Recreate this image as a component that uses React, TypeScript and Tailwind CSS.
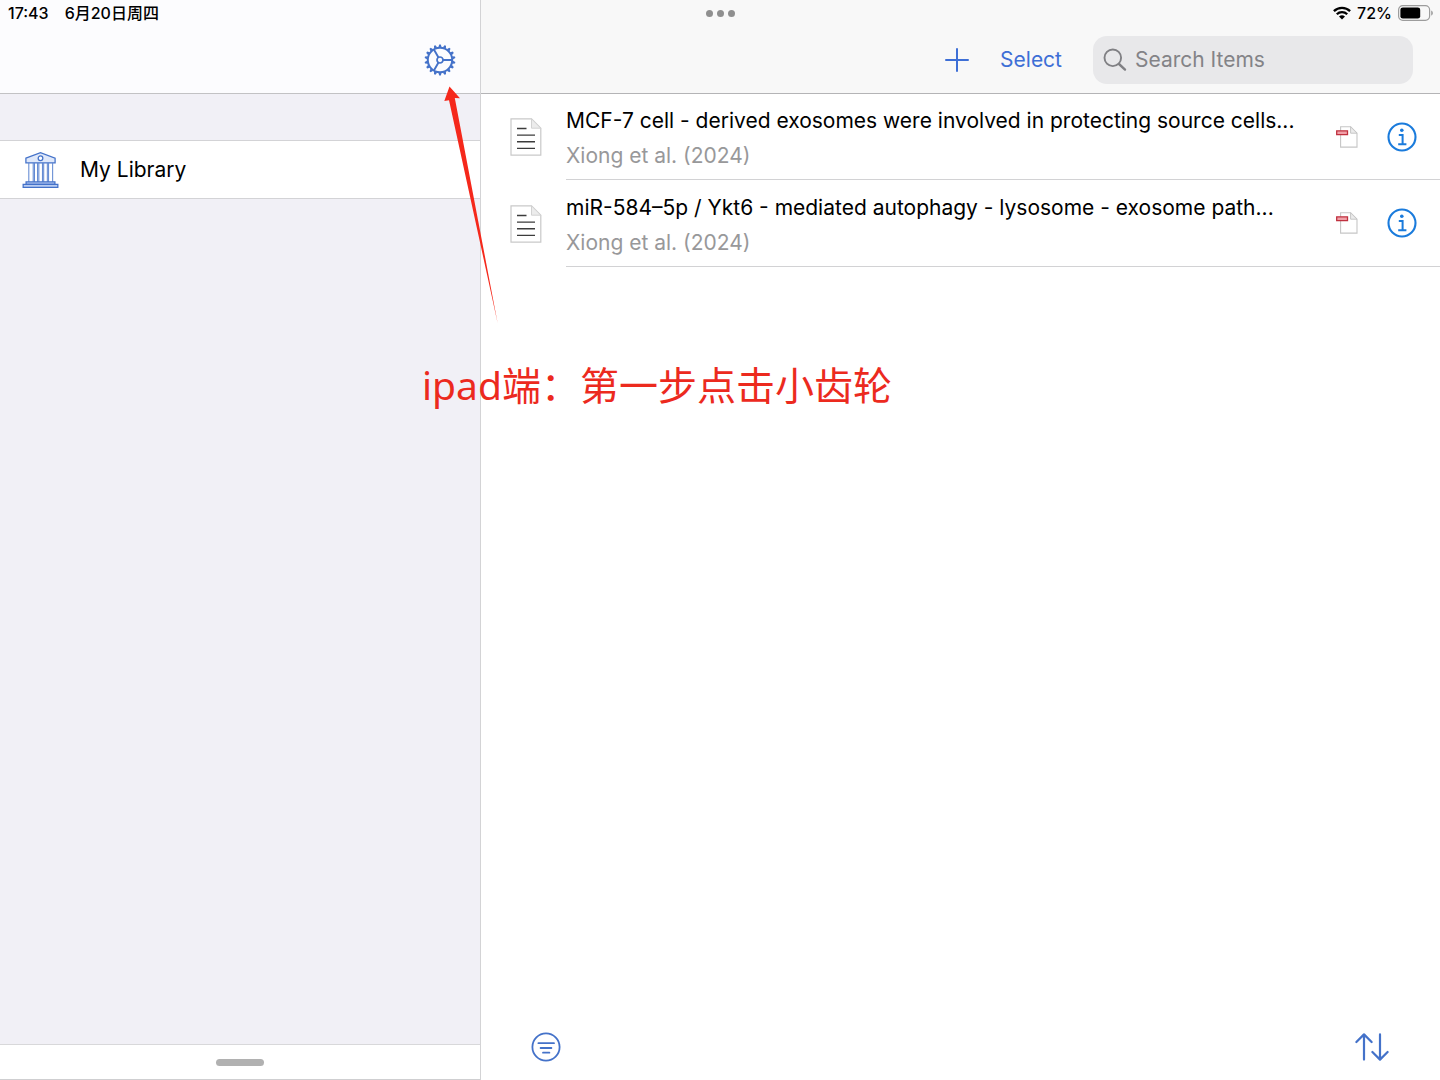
import React from "react";

type Item = { title: string; creator: string };

const items: Item[] = [
  {
    title: "MCF-7 cell - derived exosomes were involved in protecting source cells...",
    creator: "Xiong et al. (2024)",
  },
  {
    title: "miR-584–5p / Ykt6 - mediated autophagy - lysosome - exosome path...",
    creator: "Xiong et al. (2024)",
  },
];

const teeth = Array.from({ length: 18 }, (_, i) => i * 20);

function GearIcon() {
  return (
    <svg width="32" height="32" viewBox="-16 -16 32 32" fill="none" stroke="currentColor" aria-hidden="true">
      <circle r="12.2" strokeWidth="2" />
      {teeth.map((a) => (
        <path key={a} d="M-1.7 -12.6L-0.8 -15.4H0.8L1.7 -12.6Z" fill="currentColor" stroke="none" transform={`rotate(${a})`} />
      ))}
      <circle r="3" strokeWidth="1.7" />
      <path d="M3 0H12M-1.5 -2.6L-6.1 -10.5M-1.5 2.6L-6.1 10.5" strokeWidth="1.9" />
    </svg>
  );
}

function LibraryIcon() {
  return (
    <svg width="37" height="38" viewBox="0 0 38 38" fill="none" stroke="#4472c9" strokeWidth="1.3" aria-hidden="true">
      <path d="M4 6.8L19 1.2L34 6.8V11.6H4Z" fill="#dfe8fa" />
      <circle cx="19" cy="7" r="2.4" fill="#fff" />
      <path d="M7 12V31.5M11.5 12V31.5M12.8 12V31.5M16 12V31.5M17.3 12V31.5M21 12V31.5M22.3 12V31.5M26 12V31.5M27.3 12V31.5M31.5 12V31.5" strokeWidth="0.9" />
      <path d="M4.2 31.2H33.8V33.8H4.2Z" fill="#b9cdf2" />
      <path d="M1.2 33.8H36.8V36.8H1.2Z" fill="#b9cdf2" />
    </svg>
  );
}

function DocumentIcon() {
  return (
    <svg width="32" height="38" viewBox="0 0 32 38" fill="none" aria-hidden="true">
      <path d="M1 0.8H21.5L30.8 10.2V37.2H1Z" fill="#fff" stroke="#c9c9c9" strokeWidth="1.2" />
      <path d="M21.5 0.8V10.2H30.8Z" fill="#ececec" stroke="#d2d2d2" strokeWidth="1" />
      <path d="M7 10.5H16.5M7 17.1H25M7 23.8H25M7 30.4H25" stroke="#3c3c3c" strokeWidth="1.4" />
    </svg>
  );
}

function PdfIcon() {
  return (
    <svg width="22" height="22" viewBox="0 0 22 22" fill="none" aria-hidden="true">
      <path d="M4.6 0.8H14.6L21 7.2V21.1H4.6Z" fill="#fff" stroke="#c6c6c6" strokeWidth="1.1" />
      <path d="M14.6 0.8V7.2H21Z" fill="#ececec" stroke="#c6c6c6" strokeWidth="1" />
      <path d="M0.7 4.8H11.5V8.6H0.7Z" fill="#f0a0a8" stroke="#c0313f" strokeWidth="1.3" />
    </svg>
  );
}

function InfoIcon() {
  return (
    <svg width="30" height="30" viewBox="0 0 30 30" fill="none" stroke="currentColor" aria-hidden="true">
      <circle cx="15" cy="15" r="13.5" strokeWidth="2.1" />
      <circle cx="14.8" cy="8.3" r="1.8" fill="currentColor" stroke="none" />
      <path d="M11.8 12.9H15.6V22.2M11.2 22.3H19.4" strokeWidth="2" />
    </svg>
  );
}

function WifiIcon() {
  return (
    <svg width="18" height="14" viewBox="0 0 18 14" fill="none" stroke="#000" strokeWidth="2.3" aria-hidden="true">
      <path d="M0.9 5.1A11.6 11.6 0 0 1 17.1 5.1" />
      <path d="M3.8 8.3A7.4 7.4 0 0 1 14.2 8.3" />
      <path d="M9 13.6L6 10.6A4.3 4.3 0 0 1 12 10.6Z" fill="#000" stroke="none" />
    </svg>
  );
}

function BatteryIcon() {
  return (
    <svg width="36" height="16" viewBox="0 0 36 16" fill="none" aria-hidden="true">
      <rect x="0.6" y="0.6" width="31" height="14.8" rx="4.2" stroke="#9c9c9c" strokeWidth="1.2" />
      <rect x="2.4" y="2.4" width="19.8" height="11.2" rx="2.4" fill="#000" />
      <path d="M33.2 5.4C35.4 6.4 35.4 9.6 33.2 10.6Z" fill="#9c9c9c" />
    </svg>
  );
}

function SearchIcon() {
  return (
    <svg width="24" height="24" viewBox="0 0 24 24" fill="none" stroke="#808084" aria-hidden="true">
      <circle cx="9.8" cy="9.8" r="8.3" strokeWidth="1.9" />
      <path d="M16 16L22 21.6" strokeWidth="2.4" strokeLinecap="round" />
    </svg>
  );
}

export default function App() {
  return (
    <div className="relative grid min-h-screen grid-cols-[1fr_2fr] overflow-hidden bg-white font-['Inter','Noto_Sans_CJK_SC',sans-serif] text-[21px] text-black">
      <aside className="flex flex-col border-b border-[#cfcfd1] bg-[#f1f0f6]">
        <header className="flex h-[94px] flex-col border-b border-[#c2c2c4] bg-[#fcfcfe]">
          <div className="flex h-[26px] items-center gap-4 pl-2 text-base font-medium whitespace-nowrap">
            <time>17:43</time>
            <span>6月20日周四</span>
          </div>
          <div className="flex flex-1 items-center justify-end pt-px pr-6">
            <button type="button" aria-label="Settings" className="text-[#4472c9]">
              <GearIcon />
            </button>
          </div>
        </header>
        <nav className="flex-1 pt-[46px]">
          <a href="#library" className="flex h-[59px] items-center gap-[21px] border-y border-[#d3d3d6] bg-white pl-[22px]">
            <LibraryIcon />
            <span>My Library</span>
          </a>
        </nav>
        <div className="flex h-[35px] items-center justify-center border-t border-[#d8d8da] bg-white">
          <button type="button" aria-label="Resize panel" className="h-[7px] w-12 rounded-full bg-[#b1b1b1]" />
        </div>
      </aside>

      <main className="flex min-w-0 flex-col border-l border-[#d3d3d5]">
        <header className="flex h-[94px] flex-col border-b border-[#b4b4b6] bg-[#f8f8f8]">
          <div className="flex h-[26px] items-center">
            <div className="flex w-1/2 items-center justify-center gap-1">
              <span className="size-[7px] rounded-full bg-[#8f8f8f]" />
              <span className="size-[7px] rounded-full bg-[#8f8f8f]" />
              <span className="size-[7px] rounded-full bg-[#8f8f8f]" />
            </div>
            <div className="flex w-1/2 items-center justify-end gap-[6px] pr-[6px] text-base font-medium">
              <WifiIcon />
              <span>72%</span>
              <BatteryIcon />
            </div>
          </div>
          <div className="flex flex-1 items-center justify-end pt-px pr-[27px]">
            <button type="button" aria-label="Add item" className="mr-[31px] text-[#3e6fd6]">
              <svg width="24" height="24" viewBox="0 0 24 24" fill="none" stroke="currentColor" strokeWidth="2" strokeLinecap="round" aria-hidden="true">
                <path d="M12 1V23M1 12H23" />
              </svg>
            </button>
            <button type="button" className="mr-[31px] text-[#3e6fd6]">
              Select
            </button>
            <label className="flex h-12 w-80 items-center gap-2 rounded-[14px] bg-[#e8e8ea] px-[10px]">
              <SearchIcon />
              <input
                type="search"
                aria-label="Search Items"
                placeholder="Search Items"
                className="min-w-0 flex-1 bg-transparent outline-none placeholder:text-[#838387]"
              />
            </label>
          </div>
        </header>

        <ul className="flex-1">
          {items.map((item) => (
            <li key={item.title} className="flex h-[87px] pl-[29px] first:h-[86px]">
              <div className="flex w-14 shrink-0 items-center">
                <DocumentIcon />
              </div>
              <div className="flex min-w-0 flex-1 items-center border-b border-[#d2d2d4] pr-[23px]">
                <div className="min-w-0 flex-1 pt-[3px]">
                  <p className="truncate leading-[35px]">{item.title}</p>
                  <p className="truncate leading-[35px] text-[#98989a]">{item.creator}</p>
                </div>
                <div className="ml-6 flex shrink-0 items-center gap-[29px]">
                  <PdfIcon />
                  <button type="button" aria-label="Item details" className="text-[#1a7bdc]">
                    <InfoIcon />
                  </button>
                </div>
              </div>
            </li>
          ))}
        </ul>

        <footer className="flex h-[66px] items-center justify-between pr-[51px] pl-[50px] text-[#4472c9]">
          <button type="button" aria-label="Filter">
            <svg width="30" height="30" viewBox="0 0 30 30" fill="none" stroke="currentColor" strokeLinecap="round" aria-hidden="true">
              <circle cx="15" cy="15" r="13.6" strokeWidth="1.8" />
              <path d="M7.4 11.2H23M9.6 16H20.4M12 20.7H18.4" strokeWidth="1.8" />
            </svg>
          </button>
          <button type="button" aria-label="Sort">
            <svg width="34" height="28" viewBox="0 0 34 28" fill="none" stroke="currentColor" strokeWidth="2.2" strokeLinecap="round" strokeLinejoin="round" aria-hidden="true">
              <path d="M9 26.6V1.4M1.4 9L9 1.4L16.6 9M25 1.4V26.6M17.4 19L25 26.6L32.6 19" />
            </svg>
          </button>
        </footer>
      </main>

      <svg className="pointer-events-none absolute top-[86px] left-[440px]" width="60" height="240" viewBox="0 0 60 240" aria-hidden="true">
        <path d="M9.5 0.5L20 12.3L14.8 12.1L57.6 237L9 14.3L4.3 15Z" fill="#f5281b" />
      </svg>
      <p className="pointer-events-none absolute top-[357px] left-[422px] font-['Noto_Sans','Noto_Sans_CJK_SC',sans-serif] text-[39px] leading-[56px] whitespace-nowrap text-[#ec2a1e]">
        ipad端：第一步点击小齿轮
      </p>
    </div>
  );
}
